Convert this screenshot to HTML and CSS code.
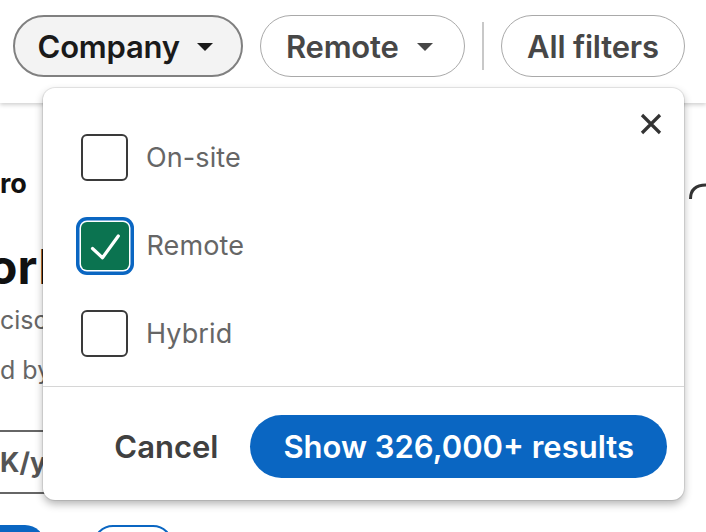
FILE: index.html
```html
<!DOCTYPE html>
<html lang="en">
<head>
<meta charset="utf-8">
<title>Filters</title>
<link rel="stylesheet" href="styles.css">
</head>
<body>
<header class="filters">
  <button class="pill pill-active">Company
    <svg class="caret" viewBox="0 0 16 8" width="16" height="8"><path d="M0 0h16L8 8z"/></svg>
  </button>
  <button class="pill pill-remote">Remote
    <svg class="caret" viewBox="0 0 16 8" width="16" height="8"><path d="M0 0h16L8 8z"/></svg>
  </button>
  <span class="divider"></span>
  <button class="pill pill-plain">All filters</button>
</header>

<main class="page">
  <div class="left-col">
    <p class="company">ro</p>
    <h1 class="title">or I</h1>
    <p class="meta">ciscc</p>
    <p class="meta meta-2">d by</p>
    <div class="salary">K/y</div>
    <div class="actions">
      <span class="act act-fill"></span>
      <span class="act act-outline"></span>
    </div>
  </div>
  <svg class="arc" viewBox="0 0 18 20" width="18" height="20"><path d="M2.5 19C2.5 10 7 5 18 5" fill="none" stroke="#333" stroke-width="3"/></svg>
</main>

<div class="dropdown">
  <button class="close" aria-label="Close">
    <svg viewBox="0 0 24 24" width="24" height="24"><path d="M3 3L21 21M21 3L3 21" stroke="#333" stroke-width="3.2" stroke-linecap="butt"/></svg>
  </button>
  <ul class="options">
    <li class="option"><span class="box"></span><span class="label">On-site</span></li>
    <li class="option"><span class="box box-checked">
      <svg viewBox="0 0 48 48" width="48" height="48"><path d="M11.5 26.5l10 9.2L37.3 14" fill="none" stroke="#fff" stroke-width="3.2" stroke-linecap="round" stroke-linejoin="round"/></svg>
    </span><span class="label">Remote</span></li>
    <li class="option"><span class="box"></span><span class="label">Hybrid</span></li>
  </ul>
  <div class="footer">
    <button class="cancel">Cancel</button>
    <button class="show">Show 326,000+ results</button>
  </div>
</div>
</body>
</html>
```

FILE: styles.css
```css
* { box-sizing: border-box; }
html, body {
  margin: 0;
  width: 706px;
  height: 532px;
  overflow: hidden;
  background: #fff;
  font-family: Inter, "Liberation Sans", sans-serif;
}
button { font-family: inherit; cursor: pointer; }

.filters {
  height: 103px;
  display: flex;
  align-items: flex-start;
  padding: 15px 0 0 13px;
  gap: 17px;
  background: #fff;
  box-shadow: 0 2px 4px rgba(0, 0, 0, 0.18);
  position: relative;
  z-index: 1;
}
.pill {
  height: 62px;
  border-radius: 31px;
  border: 1.5px solid #a9a9a9;
  background: #fff;
  color: #474747;
  font-size: 31px;
  font-weight: 600;
  letter-spacing: -0.2px;
  padding: 0 29.5px 0 23.5px;
  display: flex;
  align-items: center;
  gap: 17px;
  flex: none;
}
.pill-active {
  border: 2.5px solid #808080;
  background: #f3f3f3;
  color: #1a1a1a;
  padding: 0 28.5px 0 22.5px;
}
.pill-remote { padding: 0 31px 0 24.5px; gap: 18px; }
.pill-plain { padding: 0 25px 0 25.5px; }
.pill .caret { fill: currentColor; margin-top: 2px; }
.divider {
  width: 2px;
  height: 48px;
  background: #c8c8c8;
  margin-top: 7px;
  flex: none;
}

.page {
  position: relative;
  display: flex;
  justify-content: space-between;
  height: 429px;
  overflow: hidden;
}
.left-col {
  display: flex;
  flex-direction: column;
  width: 60px;
}
.left-col > * { flex: none; }
.company {
  margin: 66px 0 0;
  font-size: 27px;
  font-weight: 700;
  color: #111;
  line-height: 30px;
}
.title {
  margin: 42px 0 0 -12px;
  font-size: 48px;
  font-weight: 700;
  line-height: 52px;
  color: #111;
  white-space: nowrap;
  word-spacing: -10px;
}
.meta {
  margin: 12px 0 0;
  font-size: 25px;
  color: #666;
  line-height: 30px;
  white-space: nowrap;
}
.meta-2 { margin-top: 20px; }
.salary {
  margin-top: 45px;
  border-top: 2px solid #666;
  border-bottom: 2px solid #666;
  height: 64px;
  font-size: 27px;
  font-weight: 700;
  color: #555;
  display: flex;
  align-items: center;
  white-space: nowrap;
  width: 60px;
}
.actions {
  display: flex;
  gap: 48px;
  margin-top: 31px;
}
.act {
  height: 40px;
  border-radius: 20px;
  flex: none;
}
.act-fill { width: 45px; background: #0a66c2; border-radius: 0 22px 22px 0; }
.act-outline { width: 80px; border: 2px solid #0a66c2; }
.arc { margin: 77px 0 0 0; }

.dropdown {
  position: absolute;
  left: 43px;
  top: 88px;
  width: 641px;
  height: 412px;
  background: #fff;
  border-radius: 12px;
  box-shadow: 0 0 0 1px rgba(0, 0, 0, 0.08), 0 4px 8px rgba(0, 0, 0, 0.3);
  z-index: 2;
  display: flex;
  flex-direction: column;
}
.close {
  position: absolute;
  top: 24px;
  right: 21px;
  width: 24px;
  height: 24px;
  border: 0;
  padding: 0;
  background: none;
}
.close svg { display: block; }
.options {
  list-style: none;
  margin: 0;
  padding: 46px 38px 30px;
  display: flex;
  flex-direction: column;
  gap: 41px;
  height: 299px;
  border-bottom: 1.5px solid #d6d6d6;
}
.option {
  display: flex;
  align-items: center;
  gap: 18px;
  height: 47px;
}
.box {
  width: 47px;
  height: 47px;
  border: 2px solid #3a3a3a;
  border-radius: 6px;
  flex: none;
}
.box-checked {
  width: 48px;
  height: 48px;
  border: 0;
  background: #0b7350;
  border-radius: 6px;
  box-shadow: 0 0 0 1.5px #fff, 0 0 0 5px #0a66c2;
  margin-left: -0.5px;
}
.box-checked svg { display: block; }
.label {
  font-size: 27px;
  color: #666;
  letter-spacing: 0.1px;
}
.footer {
  flex: 1;
  display: flex;
  align-items: center;
  justify-content: flex-end;
  gap: 32px;
  padding: 5px 17px 0 0;
}
.cancel {
  border: 0;
  background: none;
  padding: 0;
  font-size: 31px;
  font-weight: 600;
  color: #404040;
}
.show {
  height: 63px;
  border-radius: 32px;
  border: 0;
  background: #0a66c2;
  color: #fff;
  font-size: 31px;
  font-weight: 600;
  padding: 0 33px;
}
```
